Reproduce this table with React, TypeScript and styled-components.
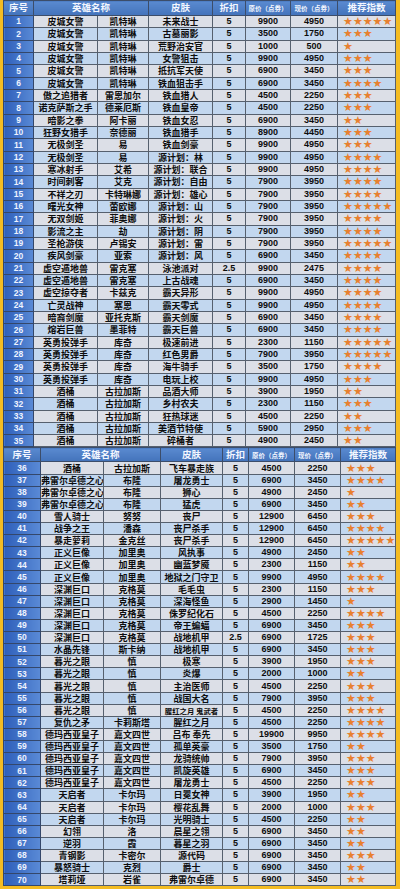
import React from 'react';
import styled, { createGlobalStyle } from 'styled-components';

const GlobalStyle = createGlobalStyle`
  html, body { margin: 0; padding: 0; background: #f4bc22; }
  body { font-family: "Liberation Sans", "Noto Sans CJK SC", sans-serif; }
`;

// 英雄|名字|皮肤|折扣|原价|现价|星级
const RAW = `
皮城女警|凯特琳|未来战士|5|9900|4950|5
皮城女警|凯特琳|古墓丽影|5|3500|1750|3
皮城女警|凯特琳|荒野治安官|5|1000|500|1
皮城女警|凯特琳|女警狙击|5|9900|4950|3
皮城女警|凯特琳|抵抗军天使|5|6900|3450|3
皮城女警|凯特琳|铁血狙击手|5|6900|3450|4
傲之追猎者|雷恩加尔|铁血猎人|5|4500|2250|3
诺克萨斯之手|德莱厄斯|铁血皇帝|5|4500|2250|3
暗影之拳|阿卡丽|铁血女忍|5|6900|3450|2
狂野女猎手|奈德丽|铁血猎手|5|8900|4450|3
无极剑圣|易|铁血剑豪|5|9900|4950|3
无极剑圣|易|源计划：林|5|9900|4950|4
寒冰射手|艾希|源计划：联合|5|9900|4950|4
时间刺客|艾克|源计划：自由|5|7900|3950|4
不祥之刃|卡特琳娜|源计划：雄心|5|7900|3950|4
曙光女神|蕾欧娜|源计划：山|5|7900|3950|5
无双剑姬|菲奥娜|源计划：火|5|7900|3950|4
影流之主|劫|源计划：阴|5|7900|3950|4
圣枪游侠|卢锡安|源计划：雷|5|7900|3950|5
疾风剑豪|亚索|源计划：风|5|6900|3450|4
虚空遁地兽|雷克塞|泳池派对|2.5|9900|2475|4
虚空遁地兽|雷克塞|上古战魂|5|6900|3450|4
虚空掠夺者|卡兹克|霸天异形|5|9900|4950|4
亡灵战神|塞恩|霸天零式|5|9900|4950|4
暗裔剑魔|亚托克斯|霸天剑魔|5|6900|3450|4
熔岩巨兽|墨菲特|霸天巨兽|5|6900|3450|4
英勇投弹手|库奇|极速前进|5|2300|1150|5
英勇投弹手|库奇|红色男爵|5|7900|3950|5
英勇投弹手|库奇|海牛骑手|5|3500|1750|4
英勇投弹手|库奇|电玩上校|5|9900|4950|3
酒桶|古拉加斯|品酒大师|5|3900|1950|2
酒桶|古拉加斯|乡村农夫|5|2300|1150|3
酒桶|古拉加斯|狂热球迷|5|4500|2250|2
酒桶|古拉加斯|美酒节特使|5|5900|2950|3
酒桶|古拉加斯|碎桶者|5|4900|2450|2
酒桶|古拉加斯|飞车暴走族|5|4500|2250|3
弗雷尔卓德之心|布隆|屠龙勇士|5|6900|3450|4
弗雷尔卓德之心|布隆|狮心|5|4900|2450|1
弗雷尔卓德之心|布隆|猛虎|5|6900|3450|2
雪人骑士|努努|丧尸|5|12900|6450|3
战争之王|潘森|丧尸杀手|5|12900|6450|4
暴走萝莉|金克丝|丧尸杀手|5|12900|6450|5
正义巨像|加里奥|风执事|5|4900|2450|2
正义巨像|加里奥|幽蓝梦魇|5|2300|1150|2
正义巨像|加里奥|地狱之门守卫|5|9900|4950|4
深渊巨口|克格莫|毛毛虫|5|2300|1150|3
深渊巨口|克格莫|深海怪鱼|5|2900|1450|1
深渊巨口|克格莫|侏罗纪化石|5|4500|2250|4
深渊巨口|克格莫|帝王蝙蝠|5|6900|3450|3
深渊巨口|克格莫|战地机甲|2.5|6900|1725|3
水晶先锋|斯卡纳|战地机甲|5|6900|3450|3
暮光之眼|慎|极寒|5|3900|1950|3
暮光之眼|慎|炎爆|5|2000|1000|2
暮光之眼|慎|主治医师|5|4500|2250|3
暮光之眼|慎|战国大名|5|7900|3950|3
暮光之眼|慎|腥红之月 鬼武者|5|4500|2250|4
复仇之矛|卡莉斯塔|腥红之月|5|4500|2250|4
德玛西亚皇子|嘉文四世|吕布 奉先|5|19900|9950|4
德玛西亚皇子|嘉文四世|孤单英豪|5|3500|1750|2
德玛西亚皇子|嘉文四世|龙骑统帅|5|7900|3950|3
德玛西亚皇子|嘉文四世|凯旋英雄|5|6900|3450|3
德玛西亚皇子|嘉文四世|屠龙勇士|5|4500|2250|3
天启者|卡尔玛|日冕女神|5|3900|1950|2
天启者|卡尔玛|樱花乱舞|5|2000|1000|3
天启者|卡尔玛|光明骑士|5|4500|2250|2
幻翎|洛|晨星之翎|5|6900|3450|2
逆羽|霞|暮星之羽|5|6900|3450|2
青钢影|卡密尔|源代码|5|6900|3450|3
暴怒骑士|克烈|爵士|5|6900|3450|2
塔莉垭|岩雀|弗雷尔卓德|5|6900|3450|2
`;

type Skin = {
  no: number;
  hero: string;
  name: string;
  skin: string;
  off: string;
  price: string;
  now: string;
  stars: number;
};

const skins: Skin[] = RAW.trim()
  .split('\n')
  .map((line, i) => {
    const [hero, name, skin, off, price, now, stars] = line.split('|');
    return { no: i + 1, hero, name, skin, off, price, now, stars: Number(stars) };
  });

const Frame = styled.div`
  width: 400px;
  box-sizing: border-box;
  padding: 0 5px 4px 3px;
  background: #f4bc22;
`;

const Sheet = styled.table<{ $row: number; $head: number }>`
  width: 392px;
  table-layout: fixed;
  border-collapse: collapse;
  color: #0d0d0d;

  thead tr { height: ${p => p.$head}px; }
  tbody tr { height: ${p => p.$row}px; }
  tbody tr:nth-child(odd) { background: #dcdfe7; }
  tbody tr:nth-child(even) { background: #c2d7ef; }
`;

const HeadCell = styled.th<{ $small?: boolean }>`
  padding: 0;
  border: 1px solid #3c4d6a;
  background: linear-gradient(#5a8ad0, #4373bb);
  color: #f4f7ff;
  font-family: "Noto Sans CJK SC", sans-serif;
  font-weight: 700;
  font-size: ${p => (p.$small ? '6.5px' : '9.5px')};
  line-height: 1;
  text-align: center;
  white-space: nowrap;
  overflow: hidden;
`;

const NoCell = styled.td`
  padding: 0;
  border: 1px solid #34476a;
  background: linear-gradient(90deg, #2e5fba, #5a8ad6);
  color: #eef3ff;
  font-family: "Liberation Sans", sans-serif;
  font-weight: 700;
  font-size: 8.5px;
  line-height: 1;
  text-align: center;
`;

const Cell = styled.td<{ $num?: boolean; $long?: boolean }>`
  padding: 0;
  border: 1px solid #56606e;
  font-family: ${p =>
    p.$num ? '"Liberation Sans", sans-serif' : '"Noto Sans CJK SC", sans-serif'};
  font-weight: 700;
  font-size: ${p => (p.$long ? '7.4px' : '9px')};
  line-height: 1;
  text-align: center;
  white-space: nowrap;
  overflow: hidden;
`;

const StarCell = styled.td`
  padding: 0 0 0 5px;
  border: 1px solid #56606e;
  color: #e8802f;
  font-family: "DejaVu Sans", sans-serif;
  font-size: 11px;
  line-height: 1;
  text-align: left;
  white-space: nowrap;
  overflow: hidden;
`;

type TableProps = {
  rows: Skin[];
  cols: number[];
  row: number;
  head: number;
};

function PriceTable({ rows, cols, row, head }: TableProps) {
  return (
    <Sheet $row={row} $head={head}>
      <colgroup>
        {cols.map((w, i) => (
          <col key={i} style={{ width: w }} />
        ))}
      </colgroup>
      <thead>
        <tr>
          <HeadCell>序号</HeadCell>
          <HeadCell colSpan={2}>英雄名称</HeadCell>
          <HeadCell>皮肤</HeadCell>
          <HeadCell>折扣</HeadCell>
          <HeadCell $small>原价（点券）</HeadCell>
          <HeadCell $small>现价（点券）</HeadCell>
          <HeadCell>推荐指数</HeadCell>
        </tr>
      </thead>
      <tbody>
        {rows.map(r => (
          <tr key={r.no}>
            <NoCell>{r.no}</NoCell>
            <Cell>{r.hero}</Cell>
            <Cell>{r.name}</Cell>
            <Cell $long={r.skin.length > 6}>{r.skin}</Cell>
            <Cell $num>{r.off}</Cell>
            <Cell $num>{r.price}</Cell>
            <Cell $num>{r.now}</Cell>
            <StarCell>{'★'.repeat(r.stars)}</StarCell>
          </tr>
        ))}
      </tbody>
    </Sheet>
  );
}

export default function App() {
  return (
    <>
      <GlobalStyle />
      <Frame>
        <PriceTable
          rows={skins.slice(0, 35)}
          cols={[30, 64, 51, 64, 33, 45, 47, 58]}
          head={15}
          row={12.34}
        />
        <PriceTable
          rows={skins.slice(35)}
          cols={[37, 63, 57, 62, 26, 46, 46, 55]}
          head={14}
          row={12.12}
        />
      </Frame>
    </>
  );
}
